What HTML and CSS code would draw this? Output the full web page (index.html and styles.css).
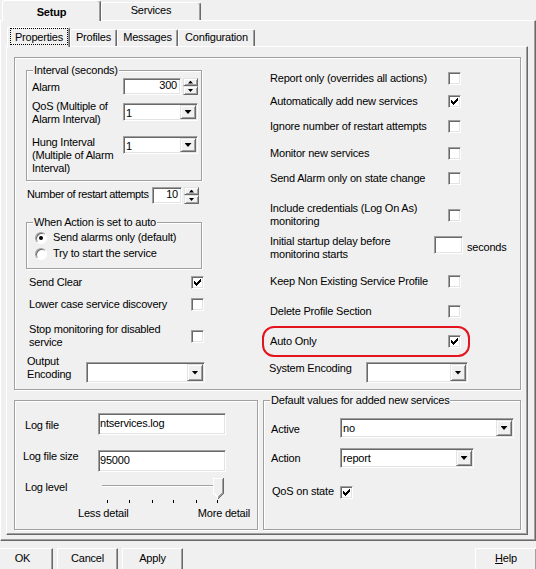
FILE: index.html
```html
<!DOCTYPE html>
<html lang="en">
<head>
    <meta charset="UTF-8">
    <meta name="viewport" content="width=device-width, initial-scale=1.0">
    <title>Setup - Properties</title>
    <link rel="stylesheet" href="styles.css">
</head>
<body>
    <div class="dialog">
        <div class="outer-tabs">
            <div class="otab active">Setup</div>
            <div class="otab">Services</div>
        </div>

        <div class="outer-panel">
            <div class="inner-tabs">
                <div class="itab tab-properties active"><span class="focus">Properties</span></div>
                <div class="itab tab-profiles">Profiles</div>
                <div class="itab tab-messages">Messages</div>
                <div class="itab tab-config">Configuration</div>
            </div>

            <div class="inner-panel">
                <div class="group main-group">
                    <!-- left column -->
                    <div class="col-left">
                        <div class="group interval">
                            <span class="group-title">Interval (seconds)</span>
                            <div class="field">
                                <span class="lbl lbl-alarm">Alarm</span>
                                <div class="spinner">
                                    <span class="edit edit-alarm">300</span>
                                    <span class="spin"><span class="spin-btn up"></span><span class="spin-btn down"></span></span>
                                </div>
                            </div>
                            <div class="field">
                                <span class="lbl">QoS (Multiple of Alarm Interval)</span>
                                <div class="combo combo-small combo-qos"><span class="value">1</span><span class="dd"></span></div>
                            </div>
                            <div class="field">
                                <span class="lbl">Hung Interval (Multiple of Alarm Interval)</span>
                                <div class="combo combo-small"><span class="value">1</span><span class="dd"></span></div>
                            </div>
                        </div>

                        <div class="restart">
                            <span class="lbl">Number of restart attempts</span>
                            <div class="spinner">
                                <span class="edit edit-restart">10</span>
                                <span class="spin"><span class="spin-btn up"></span><span class="spin-btn down"></span></span>
                            </div>
                        </div>

                        <div class="group action-group">
                            <span class="group-title">When Action is set to auto</span>
                            <div class="radio-row"><span class="radio on"></span>Send alarms only (default)</div>
                            <div class="radio-row"><span class="radio"></span>Try to start the service</div>
                        </div>

                        <div class="check-row">
                            <span class="lbl">Send Clear</span>
                            <span class="cb"><svg viewBox="0 0 7 7"><path d="M6 0h1v1H6zM5 1h2v1H5zM0 2h1v1H0zM4 2h3v1H4zM0 3h2v1H0zM3 3h3v1H3zM0 4h5v1H0zM1 5h3v1H1zM2 6h1v1H2z"/></svg></span>
                        </div>
                        <div class="check-row">
                            <span class="lbl">Lower case service discovery</span>
                            <span class="cb"></span>
                        </div>
                        <div class="check-row">
                            <span class="lbl">Stop monitoring for disabled service</span>
                            <span class="cb"></span>
                        </div>

                        <div class="output-row">
                            <span class="lbl">Output Encoding</span>
                            <div class="combo combo-output"><span class="value"></span><span class="dd"></span></div>
                        </div>
                    </div>

                    <!-- right column -->
                    <div class="col-right">
                        <div class="rcheck">
                            <span class="lbl">Report only (overrides all actions)</span>
                            <span class="cb"></span>
                        </div>
                        <div class="rcheck">
                            <span class="lbl">Automatically add new services</span>
                            <span class="cb"><svg viewBox="0 0 7 7"><path d="M6 0h1v1H6zM5 1h2v1H5zM0 2h1v1H0zM4 2h3v1H4zM0 3h2v1H0zM3 3h3v1H3zM0 4h5v1H0zM1 5h3v1H1zM2 6h1v1H2z"/></svg></span>
                        </div>
                        <div class="rcheck">
                            <span class="lbl">Ignore number of restart attempts</span>
                            <span class="cb"></span>
                        </div>
                        <div class="rcheck">
                            <span class="lbl">Monitor new services</span>
                            <span class="cb"></span>
                        </div>
                        <div class="rcheck">
                            <span class="lbl">Send Alarm only on state change</span>
                            <span class="cb"></span>
                        </div>
                        <div class="rcheck">
                            <span class="lbl">Include credentials (Log On As) monitoring</span>
                            <span class="cb"></span>
                        </div>
                        <div class="startup">
                            <span class="lbl">Initial startup delay before monitoring starts</span>
                            <span class="edit edit-delay"></span>
                            <span class="unit">seconds</span>
                        </div>
                        <div class="rcheck">
                            <span class="lbl">Keep Non Existing Service Profile</span>
                            <span class="cb"></span>
                        </div>
                        <div class="rcheck">
                            <span class="lbl">Delete Profile Section</span>
                            <span class="cb"></span>
                        </div>
                        <div class="rcheck auto-only">
                            <span class="lbl">Auto Only</span>
                            <span class="cb"><svg viewBox="0 0 7 7"><path d="M6 0h1v1H6zM5 1h2v1H5zM0 2h1v1H0zM4 2h3v1H4zM0 3h2v1H0zM3 3h3v1H3zM0 4h5v1H0zM1 5h3v1H1zM2 6h1v1H2z"/></svg></span>
                            <span class="highlight"></span>
                        </div>
                        <div class="sysenc">
                            <span class="lbl">System Encoding</span>
                            <div class="combo combo-system"><span class="value"></span><span class="dd"></span></div>
                        </div>
                    </div>
                </div>

                <div class="lower">
                    <div class="group log-group">
                        <div class="log-row">
                            <span class="lbl lbl-logfile">Log file</span>
                            <span class="edit edit-log">ntservices.log</span>
                        </div>
                        <div class="log-row log-size">
                            <span class="lbl">Log file size</span>
                            <span class="edit edit-log">95000</span>
                        </div>
                        <div class="log-row log-level">
                            <span class="lbl lbl-level">Log level</span>
                            <svg class="slider" width="128" height="27" viewBox="0 0 128 27">
                                <rect x="4" y="8" width="118" height="1" fill="#a0a0a0"/>
                                <rect x="4" y="9" width="118" height="1" fill="#fff"/>
                                <polygon points="115,1 125,1 125,16 120,21 115,16" fill="#f0f0f0"/>
                                <polyline points="115.5,16 115.5,1.5 124.5,1.5" fill="none" stroke="#fff"/>
                                <polyline points="124.5,2 124.5,16 120,20.5" fill="none" stroke="#a0a0a0"/>
                                <polyline points="125.5,1 125.5,16.5 120,22" fill="none" stroke="#696969"/>
                                <line x1="115.5" y1="16" x2="120" y2="20.5" stroke="#fff"/>
                                <rect x="9" y="23" width="1" height="3"/>
                                <rect x="31" y="23" width="1" height="3"/>
                                <rect x="54" y="23" width="1" height="3"/>
                                <rect x="75" y="23" width="1" height="3"/>
                                <rect x="98" y="23" width="1" height="3"/>
                                <rect x="119" y="23" width="1" height="3"/>
                            </svg>
                        </div>
                        <div class="detail-labels">
                            <span>Less detail</span>
                            <span>More detail</span>
                        </div>
                    </div>

                    <div class="group defaults-group">
                        <span class="group-title">Default values for added new services</span>
                        <div class="def-row">
                            <span class="lbl lbl-active">Active</span>
                            <div class="combo combo-active"><span class="value">no</span><span class="dd"></span></div>
                        </div>
                        <div class="def-row def-action">
                            <span class="lbl lbl-action">Action</span>
                            <div class="combo combo-action"><span class="value">report</span><span class="dd"></span></div>
                        </div>
                        <div class="def-row def-qos">
                            <span class="lbl">QoS on state</span>
                            <span class="cb"><svg viewBox="0 0 7 7"><path d="M6 0h1v1H6zM5 1h2v1H5zM0 2h1v1H0zM4 2h3v1H4zM0 3h2v1H0zM3 3h3v1H3zM0 4h5v1H0zM1 5h3v1H1zM2 6h1v1H2z"/></svg></span>
                        </div>
                    </div>
                </div>
            </div>
        </div>

        <div class="buttons">
            <span class="btn btn-ok">OK</span>
            <span class="btn">Cancel</span>
            <span class="btn">Apply</span>
            <span class="btn btn-help"><u>H</u>elp</span>
        </div>
    </div>
</body>
</html>
```

FILE: styles.css
```css
* {
    margin: 0;
    padding: 0;
    box-sizing: border-box;
}

body {
    font-family: "Liberation Sans", Arial, sans-serif;
    font-size: 11px;
    line-height: 13px;
    letter-spacing: -0.2px;
    color: #000;
    background: #f0f0f0;
    overflow: hidden;
}

.dialog {
    width: 536px;
    height: 569px;
    overflow: hidden;
}

/* ---------- outer tabs ---------- */
.outer-tabs {
    display: flex;
    align-items: flex-end;
    height: 20px;
    padding-left: 2px;
    position: relative;
    z-index: 1;
}

.otab {
    width: 100px;
    height: 18px;
    padding-top: 1px;
    text-align: center;
    border-top: 1px solid #fff;
    border-left: 1px solid #fff;
    border-right: 1px solid #696969;
    border-radius: 3px 3px 0 0;
    box-shadow: inset -1px 0 0 #a0a0a0;
}

.otab.active {
    width: 99px;
    height: 21px;
    margin-bottom: -1px;
    padding-top: 5px;
    font-weight: bold;
    background: #f0f0f0;
}

.outer-panel {
    height: 521px;
    border: 1px solid;
    border-color: #fff #696969 #696969 #fff;
    box-shadow: inset -1px -1px 0 #a0a0a0;
}

/* ---------- inner tabs ---------- */
.inner-tabs {
    display: flex;
    align-items: flex-end;
    height: 19px;
    margin-top: 6px;
    padding-left: 6px;
    position: relative;
    z-index: 1;
}

.itab {
    height: 17px;
    padding-top: 1px;
    text-align: center;
    border-top: 1px solid #fff;
    border-left: 1px solid #fff;
    border-right: 1px solid #696969;
    border-radius: 2px 2px 0 0;
    box-shadow: inset -1px 0 0 #a0a0a0;
}

.itab.active {
    height: 20px;
    margin-bottom: -1px;
    padding-top: 0;
    background: #f0f0f0;
}

.tab-properties { width: 63px; }
.tab-profiles { width: 47px; }
.tab-messages { width: 61px; }
.tab-config { width: 77px; }

.focus {
    display: block;
    height: 17px;
    margin: 0 1px 0 2px;
    padding-top: 2px;
    border: 1px dotted #000;
}

.inner-panel {
    width: 522px;
    height: 489px;
    margin-left: 5px;
    padding: 10px 0 0 7px;
    border: 1px solid;
    border-color: #fff #696969 #696969 #fff;
    box-shadow: inset -1px -1px 0 #a0a0a0;
}

/* ---------- group boxes ---------- */
.group {
    position: relative;
    border: 1px solid #a0a0a0;
    box-shadow: 1px 1px 0 #fff, inset 1px 1px 0 #fff;
}

.group-title {
    position: absolute;
    top: -7px;
    left: 6px;
    padding: 0 1px;
    background: #f0f0f0;
    white-space: nowrap;
}

.main-group {
    display: flex;
    width: 507px;
    height: 333px;
    padding: 12px 0 0 11px;
}

/* ---------- controls ---------- */
.edit {
    display: block;
    background: #fff;
    border: 1px solid;
    border-color: #a0a0a0 #fff #fff #a0a0a0;
    box-shadow: inset 1px 1px 0 #696969, inset -1px -1px 0 #e3e3e3;
    white-space: nowrap;
}

.combo {
    display: flex;
    background: #fff;
    border: 1px solid;
    border-color: #a0a0a0 #fff #fff #a0a0a0;
    box-shadow: inset 1px 1px 0 #696969, inset -1px -1px 0 #e3e3e3;
    padding: 1px;
}

.combo .value {
    flex: 1;
    padding: 2px 0 0 1px;
    line-height: 12px;
}

.dd,
.spin-btn {
    display: flex;
    align-items: center;
    justify-content: center;
    background: #f0f0f0;
    border: 1px solid;
    border-color: #e3e3e3 #696969 #696969 #e3e3e3;
    box-shadow: inset 1px 1px 0 #fff, inset -1px -1px 0 #a0a0a0;
}

.dd {
    width: 16px;
}

.dd::after {
    content: '';
    width: 7px;
    height: 4px;
    background: #000;
    clip-path: polygon(0 0, 100% 0, 50% 100%);
}

.spinner {
    display: flex;
    gap: 2px;
}

.spin {
    display: flex;
    flex-direction: column;
    width: 15px;
}

.spin-btn.up { height: 8px; }
.spin-btn.down { height: 9px; }

.spin-btn::after {
    content: '';
    width: 5px;
    height: 3px;
    background: #000;
}

.spin-btn.up::after { clip-path: polygon(50% 0, 100% 100%, 0 100%); }
.spin-btn.down::after { clip-path: polygon(0 0, 100% 0, 50% 100%); }

.cb {
    display: flex;
    align-items: center;
    justify-content: center;
    width: 13px;
    height: 13px;
    background: #fff;
    border: 1px solid;
    border-color: #a0a0a0 #fff #fff #a0a0a0;
    box-shadow: inset 1px 1px 0 #696969, inset -1px -1px 0 #e3e3e3;
}

.cb svg {
    display: block;
    width: 7px;
    height: 7px;
    shape-rendering: crispEdges;
}

.radio {
    position: relative;
    flex-shrink: 0;
    width: 12px;
    height: 12px;
    border-radius: 50%;
    background: #fff;
    border: 1px solid;
    border-color: #a0a0a0 #fff #fff #a0a0a0;
    box-shadow: inset 1px 1px 0 #696969;
}

.radio.on::after {
    content: '';
    position: absolute;
    left: 3px;
    top: 3px;
    width: 4px;
    height: 4px;
    border-radius: 50%;
    background: #000;
}

/* ---------- left column ---------- */
.col-left {
    display: grid;
    grid-template-rows: 117px 35px 54px 22px 25px 32px auto;
    align-content: start;
    align-items: start;
    width: 180px;
}

.interval {
    display: grid;
    grid-template-rows: 22px 36px auto;
    align-items: start;
    width: 176px;
    height: 111px;
    padding: 7px 0 0 5px;
}

.field {
    display: flex;
    align-items: flex-start;
}

.field .lbl {
    width: 91px;
}

.lbl-alarm {
    margin-top: 3px;
}

.edit-alarm {
    width: 58px;
    height: 17px;
    padding-right: 3px;
    text-align: right;
}

.combo-small {
    width: 75px;
    height: 18px;
}

.combo-qos {
    margin-top: 3px;
}

.restart {
    display: flex;
    align-items: flex-start;
    padding-left: 1px;
}

.restart .lbl {
    width: 125px;
    margin-top: 1px;
    white-space: nowrap;
    letter-spacing: -0.35px;
}

.edit-restart {
    width: 30px;
    height: 17px;
    padding-right: 3px;
    text-align: right;
}

.action-group {
    display: grid;
    grid-template-rows: 16px 16px;
    width: 176px;
    height: 47px;
    padding: 8px 0 0 8px;
}

.radio-row {
    display: flex;
    align-items: center;
    gap: 6px;
    height: 13px;
}

.check-row {
    display: flex;
    justify-content: space-between;
    align-items: center;
    padding: 0 2px 0 3px;
}

.check-row .lbl {
    max-width: 150px;
}

.output-row {
    display: flex;
    align-items: flex-start;
    padding-left: 1px;
}

.output-row .lbl {
    width: 59px;
}

.combo-output {
    width: 119px;
    height: 21px;
    margin-top: 7px;
}

/* ---------- right column ---------- */
.col-right {
    display: grid;
    grid-template-rows: 23px 25px 27px 25px 30px 33px 40px 30px 30px 27px auto;
    align-content: start;
    align-items: start;
    width: 240px;
    margin-left: 64px;
    padding-top: 2px;
}

.rcheck {
    display: grid;
    grid-template-columns: 178px 13px;
    align-items: center;
}

.startup {
    display: flex;
    align-items: flex-start;
}

.startup .lbl {
    width: 164px;
    height: 23px;
    overflow: hidden;
}

.edit-delay {
    width: 29px;
    height: 18px;
    margin-top: 1px;
}

.unit {
    margin: 6px 0 0 4px;
}

.auto-only {
    position: relative;
}

.highlight {
    position: absolute;
    left: -8px;
    top: -9px;
    width: 208px;
    height: 31px;
    border: 2px solid #e3141d;
    border-radius: 12px;
}

.sysenc {
    display: flex;
    align-items: flex-start;
    margin-left: -1px;
}

.sysenc .lbl {
    width: 97px;
}

.combo-system {
    width: 102px;
    height: 21px;
}

/* ---------- lower groups ---------- */
.lower {
    display: flex;
    gap: 5px;
    margin-top: 10px;
}

.log-group {
    width: 244px;
    height: 130px;
    padding: 12px 0 0 8px;
}

.log-row {
    display: grid;
    grid-template-columns: 75px 128px;
    align-items: start;
}

.lbl-logfile {
    margin-top: 6px;
    padding-left: 2px;
}

.edit-log {
    height: 22px;
    padding: 3px 0 0 1px;
}

.log-size {
    margin-top: 15px;
}

.log-level {
    margin-top: 5px;
}

.lbl-level {
    margin-top: 4px;
    padding-left: 2px;
}

.slider {
    display: block;
    shape-rendering: crispEdges;
}

.detail-labels {
    display: flex;
    justify-content: space-between;
    width: 172px;
    margin: 3px 0 0 55px;
}

.defaults-group {
    width: 258px;
    height: 130px;
    padding: 17px 0 0 7px;
}

.def-row {
    display: grid;
    grid-template-columns: 69px auto;
    align-items: start;
}

.lbl-active {
    margin-top: 5px;
}

.lbl-action {
    margin-top: 4px;
}

.combo-active {
    width: 174px;
    height: 20px;
}

.combo-action {
    width: 134px;
    height: 20px;
}

.def-action {
    margin-top: 10px;
}

.def-qos {
    margin-top: 17px;
}

.def-qos .lbl {
    padding-left: 1px;
}

.def-qos .cb {
    margin-top: 1px;
}

/* ---------- bottom buttons ---------- */
.buttons {
    display: flex;
    gap: 4px;
    margin-top: 7px;
}

.btn {
    width: 61px;
    height: 23px;
    padding-top: 3px;
    text-align: center;
    border: 1px solid;
    border-color: #fff #696969 #696969 #fff;
    box-shadow: inset -1px -1px 0 #a0a0a0;
}

.btn-ok {
    margin-left: -8px;
}

.btn-help {
    width: 62px;
    margin-left: auto;
    margin-right: -1px;
}
```
